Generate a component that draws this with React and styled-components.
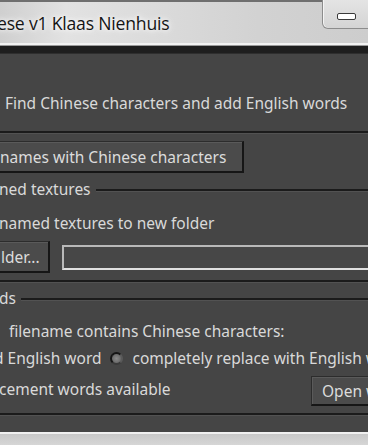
import React from 'react'
import styled, {createGlobalStyle} from 'styled-components'

const Global = createGlobalStyle`
	html, body {
		margin: 0;
		padding: 0;
		width: 368px;
		height: 445px;
		overflow: hidden;
		background: #444;
	}
	#root {
		height: 445px;
	}
`

const Window = styled.div`
	display: flex;
	flex-direction: column;
	width: 368px;
	height: 445px;
	overflow: hidden;
	font-family: 'Noto Sans', 'Open Sans', sans-serif;
`

const TitleBar = styled.div`
	display: flex;
	align-items: flex-start;
	height: 41px;
	border-top: 2px solid #6f6f6f;
	background: linear-gradient(90deg, #cfcfcf 0%, #e2e2e2 18%, #dadada 45%, #d2d2d2 70%, #cdcdcd 100%);
	border-bottom: 2px solid #f2f2f2;
`

const Title = styled.div`
	flex: 1;
	margin-left: -3px;
	padding-top: 9px;
	font-family: 'Open Sans', 'Noto Sans', sans-serif;
	font-size: 17.6px;
	color: #151515;
	letter-spacing: -0.2px;
	white-space: nowrap;
	text-shadow: 0 0 8px #fff, 0 0 4px #fff;
`

const MinButton = styled.div`
	display: flex;
	align-items: center;
	justify-content: center;
	width: 56px;
	height: 28px;
	margin-top: -2px;
	margin-right: -12px;
	border: 1px solid #8c8c8c;
	border-top: none;
	border-bottom-left-radius: 6px;
	background: linear-gradient(#e4e4e4, #d4d4d4);
	box-shadow: inset 1px 0 0 #f4f4f4;
`

const MinGlyph = styled.div`
	width: 17px;
	height: 5px;
	margin-right: 10px;
	margin-top: 4px;
	border: 1.5px solid #3a3a3a;
	border-radius: 2px;
	background: #fff;
`

const FrameBand = styled.div`
	height: 7px;
	border-top: 1px solid #9a9a9a;
	background: #1e1e1e;
	border-bottom: 1px solid #2e2e2e;
`

const Panel = styled.div`
	flex: 1;
	display: flex;
	flex-direction: column;
	padding-top: 34px;
	background: #454545;
	color: #d9d9d9;
	font-size: 15.5px;
	white-space: nowrap;
`

const Row = styled.div`
	display: flex;
	align-items: center;
	height: ${p => p.h || 24}px;
	margin-top: ${p => p.mt || 0}px;
	margin-left: ${p => p.ml || 0}px;
	gap: ${p => p.gap || 0}px;
`

const Text = styled.span`
	flex: ${p => (p.grow ? '1 1 auto' : '0 0 auto')};
	margin-top: ${p => p.dy || 0}px;
`

const Rule = styled.div`
	flex: ${p => (p.inline ? 1 : 'none')};
	height: 2px;
	margin-top: ${p => p.mt || 0}px;
	margin-left: ${p => p.ml || 0}px;
	background: #1b1b1b;
	box-shadow: 0 1px 0 #525252;
`

const Button = styled.div`
	display: flex;
	flex: none;
	align-items: center;
	height: ${p => p.h || 32}px;
	width: ${p => (p.w ? `${p.w}px` : 'auto')};
	overflow: hidden;
	box-sizing: border-box;
	margin-top: ${p => p.mt || 0}px;
	margin-left: ${p => p.ml || 0}px;
	margin-right: ${p => p.mr || 0}px;
	padding: 0 ${p => p.pr || 8}px 0 ${p => p.pl || 8}px;
	align-self: flex-start;
	background: #4b4b4b;
	border: 1px solid #2c2c2c;
	border-right: 2px solid #161616;
	border-bottom: 2px solid #161616;
	box-shadow: inset 1px 1px 0 #5a5a5a;
	color: #dcdcdc;
`

const TextBox = styled.div`
	flex: 1;
	height: 25px;
	box-sizing: border-box;
	margin-right: -20px;
	border: 2px solid #b9b9b9;
	border-bottom-color: #e0e0e0;
	background: #474747;
`

const Radio = styled.span`
	flex: none;
	width: 13px;
	height: 13px;
	margin: 1px 10px 0 8px;
	border-radius: 50%;
	box-sizing: border-box;
	border: 2px solid #151515;
	border-right-color: #5a5a5a;
	border-bottom-color: #3a3a3a;
	background: radial-gradient(circle, #8a8a8a 0%, #6e6e6e 60%, #5a5a5a 100%);
`

const Filler = styled.div`
	flex: 1;
`

const BottomFrame = styled.div`
	height: 11px;
	border-top: 2px solid #f0f0f0;
	background: linear-gradient(#c8c8c8, #d6d6d6);
`

export default function App() {
	return (
		<Window>
			<Global />
			<TitleBar>
				<Title>ese v1 Klaas Nienhuis</Title>
				<MinButton>
					<MinGlyph />
				</MinButton>
			</TitleBar>
			<FrameBand />
			<Panel>
				<Row h={30} ml={5}>
					<Text>Find Chinese characters and add English words</Text>
				</Row>
				<Rule mt={13} />
				<Button mt={8} ml={-6} pl={5} pr={16}>
					names with Chinese characters
				</Button>
				<Row h={20} mt={7} ml={-1} gap={5}>
					<Text dy={-2}>ned textures</Text>
					<Rule inline />
				</Row>
				<Row mt={11} ml={-1}>
					<Text>named textures to new folder</Text>
				</Row>
				<Row h={32} mt={6} gap={12}>
					<Button ml={-10} pl={10} pr={8}>
						lder...
					</Button>
					<TextBox />
				</Row>
				<Rule mt={7} />
				<Row h={20} mt={7} ml={-1} gap={5}>
					<Text dy={-2}>ds</Text>
					<Rule inline />
				</Row>
				<Row mt={10} ml={9}>
					<Text>filename contains Chinese characters:</Text>
				</Row>
				<Row mt={3} ml={-6}>
					<Text>d English word</Text>
					<Radio />
					<Text>completely replace with English words</Text>
				</Row>
				<Row h={30} mt={6} ml={-1}>
					<Text grow dy={-4}>
						cement words available
					</Text>
					<Button h={30} w={80} mr={-23} pl={10} pr={6}>
						Open words file
					</Button>
				</Row>
				<Rule mt={7} />
				<Filler />
			</Panel>
			<BottomFrame />
		</Window>
	)
}
